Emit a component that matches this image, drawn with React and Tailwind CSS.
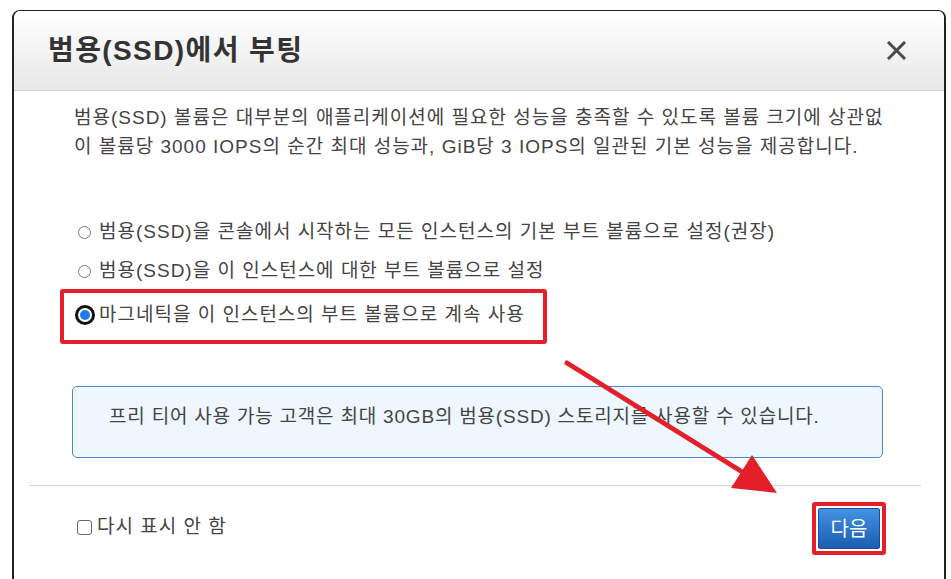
import React from 'react'

const font = { fontFamily: '"Liberation Sans", "Noto Sans CJK KR", sans-serif' }

const Radio = ({ checked }) =>
  checked ? (
    <span className="w-[20px] h-[20px] rounded-full bg-[#111] flex items-center justify-center shrink-0">
      <span className="w-[14px] h-[14px] rounded-full bg-white flex items-center justify-center">
        <span className="w-[10px] h-[10px] rounded-full bg-[#1e7cf2]" />
      </span>
    </span>
  ) : (
    <span className="w-[13px] h-[13px] rounded-full border border-[#777] bg-white shrink-0" />
  )

const App = () => {
  return (
    <div className="relative w-[951px] h-[579px] overflow-hidden bg-white pt-[10px] pl-[12px]" style={font}>
      <div className="w-[934px] h-[600px] border-x-2 border-t border-[#222] rounded-t-[8px] overflow-hidden bg-white">
        {/* header */}
        <div className="h-[80px] flex items-center justify-between pl-[34px] pr-[38px] bg-gradient-to-b from-white to-[#e8e8e8] border-b border-[#d2d2d2]">
          <span className="text-[28px] tracking-[1.4px] font-bold text-[#333]">범용(SSD)에서 부팅</span>
          <svg width="19" height="19" viewBox="0 0 19 19">
            <path d="M2 2 L17 17 M17 2 L2 17" stroke="#4a4a4a" strokeWidth="3" strokeLinecap="square" />
          </svg>
        </div>

        {/* body */}
        <div className="pl-[46px] pr-[30px] pt-[12px] text-[#444] text-[19px] tracking-[1px]">
          <p className="pl-[14px] leading-[29px] whitespace-nowrap">
            범용(SSD) 볼륨은 대부분의 애플리케이션에 필요한 성능을 충족할 수 있도록 볼륨 크기에 상관없
            <br />
            이 볼륨당 3000 IOPS의 순간 최대 성능과, GiB당 3 IOPS의 일관된 기본 성능을 제공합니다.
          </p>

          <div className="mt-[50px]">
            <div className="h-[42px] flex items-center gap-[8px] pl-[18px]">
              <Radio />
              <span>범용(SSD)을 콘솔에서 시작하는 모든 인스턴스의 기본 부트 볼륨으로 설정(권장)</span>
            </div>
            <div className="h-[36px] flex items-center gap-[8px] pl-[18px]">
              <Radio />
              <span>범용(SSD)을 이 인스턴스에 대한 부트 볼륨으로 설정</span>
            </div>
            <div className="w-[487px] h-[55px] border-[4px] border-[#e3202a] rounded-[3px] flex items-center gap-[4px] pl-[11px] pb-[3px]">
              <Radio checked />
              <span>마그네틱을 이 인스턴스의 부트 볼륨으로 계속 사용</span>
            </div>
          </div>

          <div className="mt-[42px] ml-[12px] w-[811px] h-[72px] rounded-[5px] border border-[#4d88cc] bg-[#eef6fe] pl-[36px] pt-[15px] leading-[29px] tracking-[0.8px] whitespace-nowrap">
            프리 티어 사용 가능 고객은 최대 30GB의 범용(SSD) 스토리지를 사용할 수 있습니다.
          </div>
        </div>

        <div className="mt-[27px] ml-[15px] w-[892px] h-px bg-[#d4d4d4]" />

        {/* footer */}
        <div className="flex items-start justify-between pl-[63px] pr-[58px] pt-[16px]">
          <label className="flex items-center gap-[5px] text-[19px] tracking-[1px] text-[#444] mt-[11px]">
            <span className="w-[15px] h-[15px] rounded-[3px] border border-[#666] bg-white" />
            다시 표시 안 함
          </label>
          <div className="border-[4px] border-[#e3202a] rounded-[3px] p-[2px]">
            <button className="w-[62px] h-[41px] rounded-[2px] border border-[#1b4f95] bg-gradient-to-b from-[#4393e4] to-[#1a5cb0] text-white text-[20px]">
              다음
            </button>
          </div>
        </div>
      </div>

      {/* annotation arrow */}
      <svg className="absolute left-0 top-0 pointer-events-none" width="951" height="579" viewBox="0 0 951 579">
        <line x1="567" y1="363" x2="744" y2="473" stroke="#e3202a" strokeWidth="5" strokeLinecap="round" />
        <polygon points="777,493 731,488 752,455" fill="#e3202a" />
      </svg>
    </div>
  )
}

export default App
